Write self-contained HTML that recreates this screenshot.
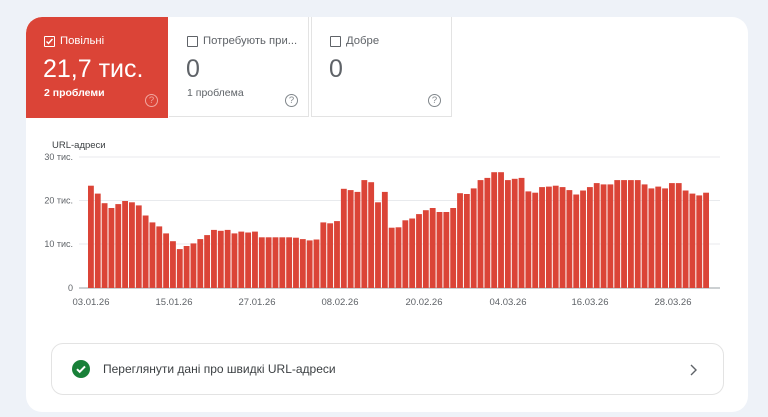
<!DOCTYPE html>
<html><head><meta charset="utf-8"><style>
*{margin:0;padding:0;box-sizing:border-box}
body{width:768px;height:417px;background:#eef2f8;font-family:"Liberation Sans",Arial,sans-serif;position:relative;overflow:hidden}
.card{position:absolute;left:26px;top:17px;width:722px;height:395px;background:#fff;border-radius:16px;overflow:hidden}
.tab{position:absolute;top:0;height:100px;border-bottom:1px solid #e3e3e3}
.t1{left:0;width:142px;background:#db4437;color:#fff;border-top-left-radius:16px;border-bottom:none;height:101px}
.t2{left:143px;width:140px;border-right:1px solid #e3e3e3}
.t3{left:285px;width:141px;border-right:1px solid #e3e3e3;border-left:1px solid #e3e3e3}
.lbl{position:absolute;left:18px;top:18px;font-size:11.3px;display:flex;align-items:center;gap:5px;color:#5f6368;white-space:nowrap}
.t1 .lbl{color:#fff}
.cb{width:11px;height:11px;border:1.5px solid #5f6368;border-radius:1px;position:relative;flex:none}
.t1 .cb{border-color:#fff}
.num{position:absolute;left:17px;top:38px;font-size:25px;color:#5f6368}
.t1 .num{color:#fff}
.sub{position:absolute;left:18px;top:70px;font-size:10.5px;color:#5f6368}
.t1 .sub{color:#fff;font-weight:bold}
.q{position:absolute;right:10px;top:77px;width:13px;height:13px;border:1.3px solid #80868b;border-radius:50%;font-size:9.5px;color:#80868b;text-align:center;line-height:11px}
.t1 .q{border-color:#f1a8a0;color:#f1a8a0}
.link{position:absolute;left:25px;top:326px;width:673px;height:52px;border:1px solid #e3e3e3;border-radius:12px}
</style></head><body>
<div class="card">
<div class="tab t1"><div class="lbl"><span class="cb"><svg width="9" height="9" viewBox="0 0 9 9" style="position:absolute;left:0;top:0"><path d="M1.5 4.5l2 2 4-4.5" stroke="#fff" stroke-width="1.4" fill="none"/></svg></span>Повільні</div><div class="num">21,7 тис.</div><div class="sub">2 проблеми</div><div class="q">?</div></div>
<div class="tab t2"><div class="lbl"><span class="cb"></span>Потребують при...</div><div class="num">0</div><div class="sub">1 проблема</div><div class="q">?</div></div>
<div class="tab t3"><div class="lbl"><span class="cb"></span>Добре</div><div class="num">0</div><div class="q">?</div></div>
<div class="link">
<svg width="18" height="18" style="position:absolute;left:20px;top:16px" viewBox="0 0 18 18"><circle cx="9" cy="9" r="9" fill="#188038"/><path d="M5 9.2l2.7 2.6 5.3-5.4" stroke="#fff" stroke-width="2" fill="none"/></svg>
<div style="position:absolute;left:51px;top:18px;font-size:12px;color:#3c4043">Переглянути дані про швидкі URL-адреси</div>
<svg width="8" height="12" style="position:absolute;right:26px;top:20px" viewBox="0 0 8 12"><path d="M2 1l5 5-5 5" stroke="#5f6368" stroke-width="1.4" fill="none"/></svg>
</div>
</div>
<svg id="ch" width="768" height="417" style="position:absolute;left:0;top:0" font-family="Liberation Sans,Arial,sans-serif"></svg>
<script>
var v=[23.4,21.6,19.4,18.3,19.2,19.9,19.6,18.9,16.6,15.0,14.1,12.5,10.7,8.9,9.6,10.2,11.2,12.1,13.3,13.1,13.3,12.5,12.9,12.7,12.9,11.6,11.6,11.6,11.6,11.6,11.5,11.2,10.9,11.1,15.0,14.8,15.3,22.7,22.4,22.0,24.7,24.2,19.6,22.0,13.8,13.9,15.5,15.9,16.9,17.8,18.3,17.4,17.4,18.3,21.7,21.5,22.8,24.7,25.2,26.5,26.5,24.7,25.0,25.2,22.1,21.8,23.1,23.2,23.4,23.1,22.4,21.4,22.3,23.1,24.0,23.7,23.7,24.7,24.7,24.7,24.7,23.7,22.8,23.2,22.8,24.0,24.0,22.3,21.6,21.2,21.8];
var s='<text x="52" y="148" font-size="9.5" fill="#3c4043">URL-адреси</text>';
var ys=[[288,"0"],[244,"10 тис."],[200.5,"20 тис."],[157,"30 тис."]];
ys.forEach(function(a){s+='<line x1="79" x2="720" y1="'+a[0]+'" y2="'+a[0]+'" stroke="'+(a[1]=="0"?"#9aa0a6":"#e8eaed")+'" stroke-width="1"/><text x="73" y="'+(a[0]+3)+'" font-size="9" fill="#5f6368" text-anchor="end">'+a[1]+'</text>';});
var st=(710-88)/v.length;
v.forEach(function(x,i){var h=x*4.37;s+='<rect x="'+(88+i*st).toFixed(2)+'" y="'+(288-h).toFixed(1)+'" width="'+(st-1).toFixed(2)+'" height="'+h.toFixed(1)+'" fill="#db4437"/>';});
[["03.01.26",91],["15.01.26",174],["27.01.26",257],["08.02.26",340],["20.02.26",424],["04.03.26",508],["16.03.26",590],["28.03.26",673]].forEach(function(a){s+='<text x="'+a[1]+'" y="305" font-size="9.5" fill="#5f6368" text-anchor="middle">'+a[0]+'</text>';});
document.getElementById('ch').innerHTML=s;
</script>
</body></html>
